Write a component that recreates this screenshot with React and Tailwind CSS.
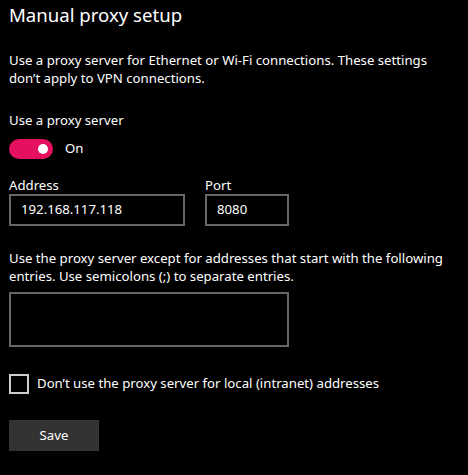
export default function App() {
  return (
    <div
      className="h-[475px] w-[468px] bg-black px-[9px] text-[13.2px] text-white"
      style={{ fontFamily: '"Noto Sans", "Open Sans", sans-serif' }}
    >
      <h1 className="text-[18.6px] leading-[30px]">Manual proxy setup</h1>

      <p className="mt-[21px] leading-[18px]">
        Use a proxy server for Ethernet or Wi-Fi connections. These settings
        don’t apply to VPN connections.
      </p>

      <div className="mt-[24px] leading-[18px]">Use a proxy server</div>

      <div className="mt-[10px] flex items-center gap-3">
        <div className="flex h-[20px] w-[44px] items-center justify-end rounded-full bg-[#e5105f] pr-[5px]">
          <div className="size-[10px] rounded-full bg-white" />
        </div>
        <span>On</span>
      </div>

      <div className="mt-[17px] flex gap-[20px]">
        <div className="flex flex-col">
          <label className="leading-[18px]">Address</label>
          <div className="flex h-[32px] w-[176px] items-center border-2 border-[#666] pl-[10px]">
            192.168.117.118
          </div>
        </div>
        <div className="flex flex-col">
          <label className="leading-[18px]">Port</label>
          <div className="flex h-[32px] w-[84px] items-center border-2 border-[#666] pl-[10px]">
            8080
          </div>
        </div>
      </div>

      <p className="mt-[23px] leading-[18px]">
        Use the proxy server except for addresses that start with the following
        entries. Use semicolons (;) to separate entries.
      </p>

      <div className="mt-[7px] h-[55px] w-[280px] border-2 border-[#666]" />

      <div className="mt-[27px] flex items-center gap-2">
        <div className="size-[20px] border-2 border-[#cdcdcd]" />
        <span>Don’t use the proxy server for local (intranet) addresses</span>
      </div>

      <button className="mt-[26px] flex h-[31px] w-[90px] items-center justify-center bg-[#333] text-white">
        Save
      </button>
    </div>
  );
}
